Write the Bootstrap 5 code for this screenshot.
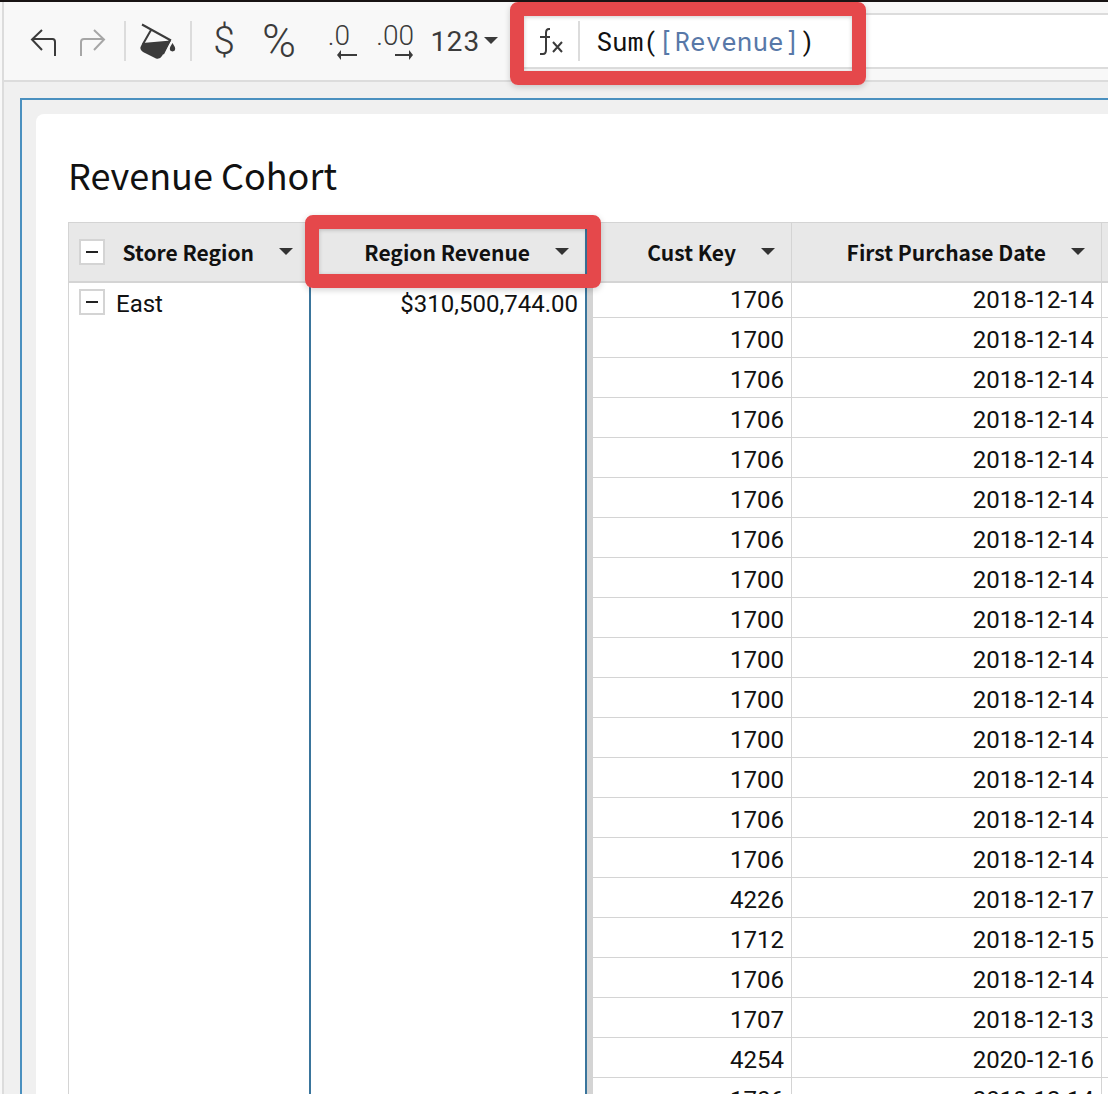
<!DOCTYPE html>
<html lang="en">
<head>
<meta charset="utf-8">
<meta name="viewport" content="width=device-width, initial-scale=1">
<title>Revenue Cohort</title>
<link href="https://cdn.jsdelivr.net/npm/bootstrap@5.3.0/dist/css/bootstrap.min.css" rel="stylesheet">
<style>
  :root { --line: #dcdcdc; --grid: #d4d4d4; --ink: #3b3b3b; --select: #4a90bf; --column: #3a759c; --mark: #e5484b; }
  body { font-family: Roboto, "Liberation Sans", sans-serif; font-size: 24px; line-height: 32px; color: #111; background: #f0f0f0; }
  .app { border-top: 2px solid #181414; }
  .rail { width: 4px; border-right: 2px solid var(--line); background: #f8f8f8; }
  .toolbar { height: 80px; padding-left: 24px; background: #f8f8f8; border-bottom: 2px solid var(--line); color: var(--ink); }
  .tool { display: flex; align-items: center; justify-content: center; border: 0; padding: 0; background: none; color: inherit; height: 40px; flex: none; }
  .tool:disabled { color: #a6a6a6; }
  .tool svg, .caret svg { display: block; flex: none; fill: none; stroke: currentColor; stroke-width: 2; }
  .w-arrow { width: 32px; }
  .w-bucket { width: 48px; }
  .thin { font-weight: 300; }
  .sign-dollar { width: 32px; font-size: 39px; }
  .sign-percent { width: 46px; font-size: 46px; }
  .decimals { flex-direction: column; align-items: flex-end; width: 40px; font-size: 28px; line-height: 28px; }
  .digits { font-family: "Roboto Mono", Roboto, monospace; font-size: 28px; }
  .rule { width: 2px; height: 40px; background: var(--line); flex: none; }
  .formula { height: 56px; background: #fff; border: 2px solid var(--line); border-right: 0; }
  .formula-part { width: 342px; padding-left: 12px; }
  .formula-text { font-family: "Roboto Mono", "DejaVu Sans Mono", monospace; font-size: 26px; color: #111; outline: 0; white-space: nowrap; }
  .ref-name { color: #5878a8; }
  .callout-box { position: absolute; border: 14px solid var(--mark); border-radius: 8px; box-shadow: 0 2px 6px rgba(0,0,0,.18), inset 0 1px 4px rgba(0,0,0,.2); pointer-events: none; z-index: 2; }
  .callout-formula { inset: -13px 0 -18px -14px; }
  .callout-column { inset: -8px -14px -7px -6px; }
  .canvas { padding: 16px 0 0 16px; }
  .selection { border: 2px solid var(--select); border-width: 2px 0 0 2px; padding: 14px 0 0 14px; }
  .sheet { background: #fff; border-top-left-radius: 8px; padding: 38px 0 0 32px; }
  .sheet-title { font-family: "Noto Sans CJK SC", "Noto Sans", sans-serif; font-size: 36px; line-height: 44px; font-weight: 400; margin: 0 0 26px; }
  .pivot { table-layout: fixed; width: 100%; border-collapse: separate; border-spacing: 0; }
  .pivot th { position: relative; height: 61px; padding: 0 16px 0 10px; background: #e8e8e8; border-top: 1px solid var(--grid); border-bottom: 2px solid var(--grid); border-right: 1px solid var(--grid); font-family: "Noto Sans CJK SC", "Noto Sans", sans-serif; font-size: 21px; font-weight: 700; white-space: nowrap; }
  .pivot td { height: 40px; padding: 6px 7px 1px; border-right: 1px solid var(--grid); border-bottom: 1px solid var(--grid); text-align: right; vertical-align: middle; }
  .pivot tr:first-child td { height: 35px; padding: 1px 7px; }
  .pivot th:first-child, .pivot .region { border-left: 1px solid var(--grid); border-right: 2px solid var(--column); }
  .pivot tr:first-child .region { padding: 5px 10px; text-align: left; vertical-align: top; }
  .region .toggle { margin: 1px 11px 0 0; }
  .pivot .total-head, .pivot .total { border-right: 6px solid var(--grid); box-shadow: inset -2px 0 var(--column); }
  .pivot tr:first-child .total { padding: 5px 9px; vertical-align: top; }
  .pivot .total-head { padding-right: 18px; }
  .c-region { width: 243px; } .c-total { width: 282px; } .c-key { width: 199px; } .c-date { width: 310px; }
  .toggle { width: 26px; height: 26px; padding: 0; border: 2px solid var(--grid); background: #fff; display: flex; align-items: center; justify-content: center; flex: none; }
  .toggle::before { content: ""; width: 12px; height: 2px; background: #222; }
  .caret { border: 0; background: none; padding: 0; margin-left: 25px; color: #333; }
  .caret svg { fill: currentColor; stroke: none; }
</style>
<script src="https://cdn.jsdelivr.net/npm/bootstrap@5.3.0/dist/js/bootstrap.bundle.min.js"></script>
</head>
<body>
<div class="app d-flex vh-100 overflow-hidden">
  <div class="rail flex-shrink-0"></div>
  <div class="flex-grow-1 d-flex flex-column overflow-hidden">
    <header class="toolbar d-flex align-items-center flex-shrink-0">
      <button class="tool w-arrow me-3" type="button" aria-label="Undo"><svg width="32" height="32" viewBox="0 0 32 32"><path d="M14 5 4 14.500 14 25M4 14H24.500Q27 14 27 17V31"/></svg></button>
      <button class="tool w-arrow me-3" type="button" aria-label="Redo" disabled><svg width="32" height="32" viewBox="0 0 32 32"><path d="M18 5 28 14.500 18 25M28 14H8Q5 14 5 17V31"/></svg></button>
      <span class="rule"></span>
      <button class="tool w-bucket mx-2 px-1" type="button" aria-label="Fill color"><svg width="40" height="40" viewBox="0 0 40 40"><path d="M4 3.500 33 19.500M13 9 5 23M32 19 25 33"/><path d="M4.500 22 33 19.500 24 35Q22 38.500 18 37.500L5 31Q1 28 3 25ZM34.500 22Q40 30 34.500 30.500 29 30 34.500 22Z" fill="currentColor" stroke="none"/></svg></button>
      <span class="rule"></span>
      <button class="tool sign-dollar thin ms-3" type="button" aria-label="Currency format">$</button>
      <button class="tool sign-percent thin ms-3" type="button" aria-label="Percent format">%</button>
      <button class="tool decimals thin ms-3 me-2" type="button" aria-label="Fewer decimals"><span class="pe-2">.0</span><svg width="22" height="10" viewBox="0 0 22 10"><path d="M3 5H21"/><path d="M1 5 5 0V10Z" fill="currentColor" stroke="none"/></svg></button>
      <button class="tool decimals thin ms-2" type="button" aria-label="More decimals"><span>.00</span><svg width="22" height="10" viewBox="0 0 22 10"><path d="M3 5H19"/><path d="M21 5 17 0V10Z" fill="currentColor" stroke="none"/></svg></button>
      <button class="tool digits ms-3" type="button">123<svg class="ms-1" width="14" height="8" viewBox="0 0 14 8"><path d="M0 0H14L7 7Z" fill="currentColor" stroke="none"/></svg></button>
      <div class="formula flex-grow-1 ms-4">
        <div class="formula-part h-100 d-flex align-items-center position-relative">
          <svg class="flex-shrink-0" width="34" height="32" viewBox="0 0 34 32" fill="none" stroke="#3b3b3b" stroke-width="2" aria-hidden="true"><path d="M14 4H13Q10 4 10 8V25Q10 29 7 29H4M4 12H14M17 17 26 27M26 17 17 27"/></svg>
          <span class="rule ms-2"></span>
          <div class="formula-text ms-3" role="textbox" aria-label="Formula" contenteditable="true" spellcheck="false">Sum(<span class="ref-name">[Revenue]</span>)</div>
          <div class="callout-box callout-formula"></div>
        </div>
      </div>
    </header>
    <main class="canvas flex-grow-1 d-flex overflow-hidden">
      <div class="selection flex-grow-1 d-flex overflow-hidden">
        <section class="sheet flex-grow-1 overflow-hidden">
          <h1 class="sheet-title">Revenue Cohort</h1>
          <table class="pivot">
            <colgroup><col class="c-region"><col class="c-total"><col class="c-key"><col class="c-date"><col></colgroup>
            <thead>
              <tr>
                <th scope="col"><div class="d-flex align-items-center"><button class="toggle" type="button" aria-label="Collapse all"></button><span class="ms-auto">Store Region</span><button class="caret" type="button" aria-label="Store Region menu"><svg width="14" height="8" viewBox="0 0 14 8"><path d="M0 0H14L7 7Z"/></svg></button></div></th>
                <th scope="col" class="total-head"><div class="d-flex align-items-center justify-content-end"><span>Region Revenue</span><button class="caret" type="button" aria-label="Region Revenue menu"><svg width="14" height="8" viewBox="0 0 14 8"><path d="M0 0H14L7 7Z"/></svg></button></div><div class="callout-box callout-column"></div></th>
                <th scope="col"><div class="d-flex align-items-center justify-content-end"><span>Cust Key</span><button class="caret" type="button" aria-label="Cust Key menu"><svg width="14" height="8" viewBox="0 0 14 8"><path d="M0 0H14L7 7Z"/></svg></button></div></th>
                <th scope="col"><div class="d-flex align-items-center justify-content-end"><span>First Purchase Date</span><button class="caret" type="button" aria-label="First Purchase Date menu"><svg width="14" height="8" viewBox="0 0 14 8"><path d="M0 0H14L7 7Z"/></svg></button></div></th>
                <th class="p-0 border-end-0"></th>
              </tr>
            </thead>
            <tbody>
              <tr>
                <td class="region" rowspan="21"><div class="d-flex"><button class="toggle" type="button" aria-label="Collapse East"></button><span>East</span></div></td>
                <td class="total" rowspan="21">$310,500,744.00</td>
                <td>1706</td><td>2018-12-14</td><td class="p-0 border-end-0"></td>
              </tr>
              <tr><td>1700</td><td>2018-12-14</td><td class="p-0 border-end-0"></td></tr>
              <tr><td>1706</td><td>2018-12-14</td><td class="p-0 border-end-0"></td></tr>
              <tr><td>1706</td><td>2018-12-14</td><td class="p-0 border-end-0"></td></tr>
              <tr><td>1706</td><td>2018-12-14</td><td class="p-0 border-end-0"></td></tr>
              <tr><td>1706</td><td>2018-12-14</td><td class="p-0 border-end-0"></td></tr>
              <tr><td>1706</td><td>2018-12-14</td><td class="p-0 border-end-0"></td></tr>
              <tr><td>1700</td><td>2018-12-14</td><td class="p-0 border-end-0"></td></tr>
              <tr><td>1700</td><td>2018-12-14</td><td class="p-0 border-end-0"></td></tr>
              <tr><td>1700</td><td>2018-12-14</td><td class="p-0 border-end-0"></td></tr>
              <tr><td>1700</td><td>2018-12-14</td><td class="p-0 border-end-0"></td></tr>
              <tr><td>1700</td><td>2018-12-14</td><td class="p-0 border-end-0"></td></tr>
              <tr><td>1700</td><td>2018-12-14</td><td class="p-0 border-end-0"></td></tr>
              <tr><td>1706</td><td>2018-12-14</td><td class="p-0 border-end-0"></td></tr>
              <tr><td>1706</td><td>2018-12-14</td><td class="p-0 border-end-0"></td></tr>
              <tr><td>4226</td><td>2018-12-17</td><td class="p-0 border-end-0"></td></tr>
              <tr><td>1712</td><td>2018-12-15</td><td class="p-0 border-end-0"></td></tr>
              <tr><td>1706</td><td>2018-12-14</td><td class="p-0 border-end-0"></td></tr>
              <tr><td>1707</td><td>2018-12-13</td><td class="p-0 border-end-0"></td></tr>
              <tr><td>4254</td><td>2020-12-16</td><td class="p-0 border-end-0"></td></tr>
              <tr><td>1706</td><td>2018-12-14</td><td class="p-0 border-end-0"></td></tr>
            </tbody>
          </table>
        </section>
      </div>
    </main>
  </div>
</div>
</body>
</html>
